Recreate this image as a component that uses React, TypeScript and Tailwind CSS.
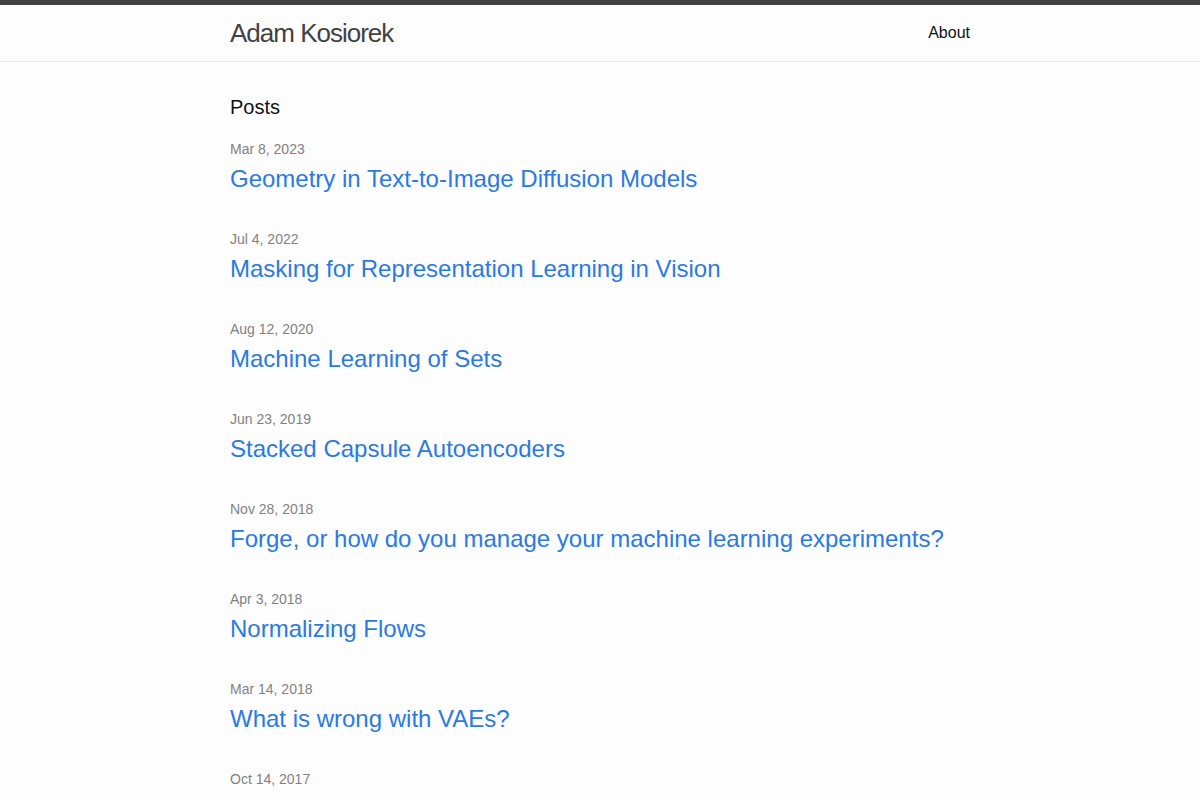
import React from 'react';

const posts = [
  { date: 'Mar 8, 2023', title: 'Geometry in Text-to-Image Diffusion Models' },
  { date: 'Jul 4, 2022', title: 'Masking for Representation Learning in Vision' },
  { date: 'Aug 12, 2020', title: 'Machine Learning of Sets' },
  { date: 'Jun 23, 2019', title: 'Stacked Capsule Autoencoders' },
  { date: 'Nov 28, 2018', title: 'Forge, or how do you manage your machine learning experiments?' },
  { date: 'Apr 3, 2018', title: 'Normalizing Flows' },
  { date: 'Mar 14, 2018', title: 'What is wrong with VAEs?' },
  { date: 'Oct 14, 2017', title: '' },
];

const App: React.FC = () => {
  return (
    <div className="min-h-screen bg-[#fdfdfd] text-[#111] text-[16px] leading-[1.5] font-['Liberation_Sans',Arial,sans-serif]">
      {/* Header */}
      <header className="border-t-[5px] border-t-[#424242] border-b border-b-[#e8e8e8] min-h-[56px]">
        <div className="max-w-[800px] mx-auto px-[30px] flex justify-between">
          <a href="#" className="text-[26px] leading-[56px] tracking-[-1px] text-[#424242]">
            Adam Kosiorek
          </a>
          <nav className="leading-[56px]">
            <a href="#" className="text-[#111]">About</a>
          </nav>
        </div>
      </header>

      {/* Content */}
      <main className="py-[30px]">
        <div className="max-w-[800px] mx-auto px-[30px]">
          <h2 className="text-[20px] leading-[30px] mb-[15px]">Posts</h2>
          <ul>
            {posts.map((post) => (
              <li key={post.date} className="mb-[30px]">
                <span className="text-[14px] text-[#828282]">{post.date}</span>
                {post.title && (
                  <h3 className="text-[24px] leading-[36px]">
                    <a href="#" className="text-[#2a7ae2]">{post.title}</a>
                  </h3>
                )}
              </li>
            ))}
          </ul>
        </div>
      </main>
    </div>
  );
};

export default App;
